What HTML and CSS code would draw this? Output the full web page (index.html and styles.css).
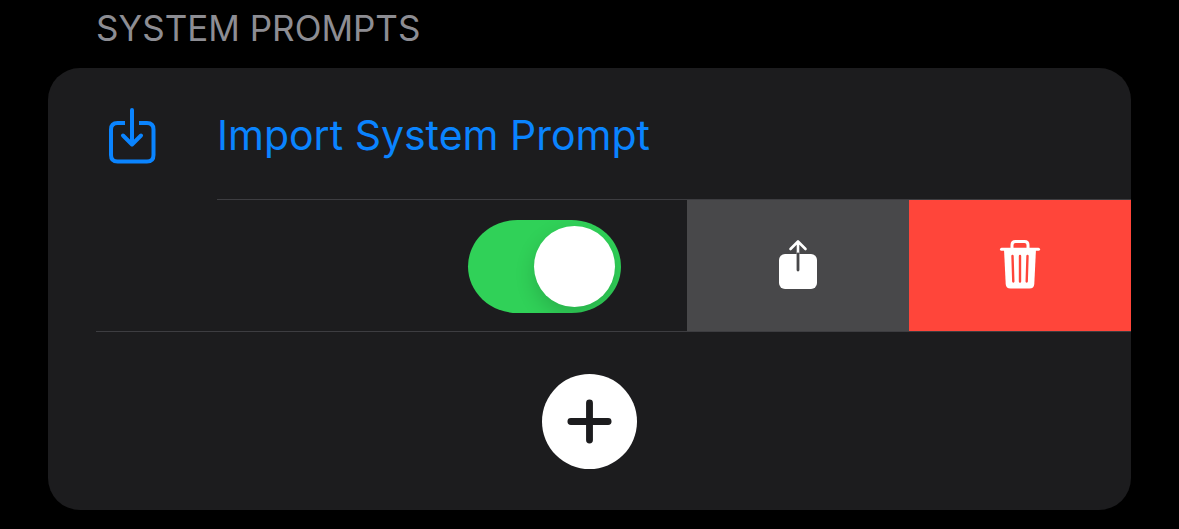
FILE: index.html
```html
<!DOCTYPE html>
<html lang="en">
<head>
<meta charset="utf-8">
<meta name="viewport" content="width=device-width, initial-scale=1">
<title>System Prompts</title>
<link rel="stylesheet" href="styles.css">
</head>
<body>
<main class="section">
  <h2 class="section-title">SYSTEM PROMPTS</h2>
  <div class="card">
    <button class="import-row" type="button">
      <svg class="import-icon" viewBox="0 0 48 58" aria-hidden="true">
        <path d="M17 16H9.500Q3 16 3 22.500V48Q3 54.500 9.500 54.500H39Q45.500 54.500 45.500 48V22.500Q45.500 16 39 16H31"/>
        <path class="arrow" d="M24 3V37M15 28.500L24 37.500L33 28.500"/>
      </svg>
      <span class="import-label">Import System Prompt</span>
    </button>
    <div class="prompt-row">
      <div class="prompt-content">
        <input class="switch" type="checkbox" aria-label="Enable prompt" checked>
      </div>
      <button class="action share" type="button" aria-label="Share">
        <svg class="share-icon" viewBox="0 0 40 52" aria-hidden="true">
          <rect x="1" y="15" width="38" height="35" rx="6" fill="#fff"/>
          <path d="M20 14.500V3M12.500 10L20 2.500L27.500 10" fill="none" stroke="#fff" stroke-width="2.600" stroke-linecap="round" stroke-linejoin="round"/>
          <path d="M20 15V31" fill="none" stroke="#48484a" stroke-width="2.800" stroke-linecap="round"/>
        </svg>
      </button>
      <button class="action delete" type="button" aria-label="Delete">
        <svg class="trash-icon" viewBox="0 0 42 52" aria-hidden="true">
          <path d="M13 10V6Q13 2.500 16.500 2.500H25.500Q29 2.500 29 6V10" fill="none" stroke="#fff" stroke-width="3"/>
          <path d="M2.500 10.300H39.500" fill="none" stroke="#fff" stroke-width="3" stroke-linecap="round"/>
          <path d="M5 10H37L35.300 45Q35 49.500 30.500 49.500H11.500Q7 49.500 6.700 45Z" fill="#fff"/>
          <path d="M13.500 17L14.300 42.500M21 17V42.500M28.500 17L27.700 42.500" fill="none" stroke="#ff453a" stroke-width="2.400" stroke-linecap="round"/>
        </svg>
      </button>
    </div>
    <div class="add-row">
      <button class="add" type="button" aria-label="Add prompt">
        <svg class="add-icon" viewBox="0 0 48 48" aria-hidden="true">
          <path d="M24 5V43M5 24H43"/>
        </svg>
      </button>
    </div>
  </div>
</main>
</body>
</html>
```
FILE: styles.css
```css
* {
  box-sizing: border-box;
}

body {
  margin: 0;
  background: #000;
  font-family: Inter, "Liberation Sans", sans-serif;
}

button {
  border: 0;
  padding: 0;
  font: inherit;
  cursor: pointer;
}

svg {
  display: block;
}

.section {
  padding: 8px 48px 19px;
}

.section-title {
  margin: 0 0 20px;
  padding-left: 48px;
  color: #8d8d93;
  font-size: 35px;
  line-height: 40px;
  font-weight: 400;
}

.card {
  overflow: hidden;
  border-radius: 32px;
  background: #1c1c1e;
}

.import-row {
  display: flex;
  align-items: center;
  width: 100%;
  padding-left: 60px;
  background: none;
  color: #0a84ff;
  text-align: left;
}

.import-icon {
  width: 48px;
  height: 58px;
  margin: 4px 61px 0 0;
  fill: none;
  stroke: currentColor;
  stroke-width: 4;
}

.arrow {
  stroke-linecap: round;
  stroke-linejoin: round;
}

.import-label {
  flex: 1;
  padding: 41px 0 38px;
  border-bottom: 1px solid #3d3d41;
  font-size: 41px;
  line-height: 52px;
}

.prompt-row {
  display: flex;
  min-height: 131px;
}

.prompt-content {
  display: flex;
  flex: 1;
  align-items: center;
  justify-content: flex-end;
  margin-left: 48px;
  padding: 1px 66px 0 0;
}

.switch {
  display: flex;
  align-items: center;
  justify-content: flex-end;
  appearance: none;
  width: 153px;
  height: 93px;
  margin: 0;
  padding-right: 6px;
  overflow: hidden;
  border-radius: 50px / 47px;
  background: #30d158;
}

.switch::before {
  content: "";
  width: 81px;
  height: 81px;
  border-radius: 50%;
  background: #fff;
  box-shadow: 0 8px 20px rgba(0, 0, 0, 0.16);
}

.switch:not(:checked) {
  justify-content: flex-start;
  padding: 0 0 0 6px;
  background: #39393d;
}

.action {
  display: flex;
  align-items: center;
  justify-content: center;
  width: 222px;
  padding-bottom: 2px;
}

.share {
  background: #48484a;
}

.delete {
  background: #ff453a;
}

.share-icon {
  width: 40px;
  height: 52px;
}

.trash-icon {
  width: 42px;
  height: 52px;
}

.add-row {
  display: flex;
  justify-content: center;
  margin-left: 48px;
  padding: 42px 48px 41px 0;
  border-top: 1px solid #3d3d41;
}

.add {
  display: flex;
  align-items: center;
  justify-content: center;
  width: 95px;
  height: 95px;
  border-radius: 50%;
  background: #fff;
}

.add-icon {
  width: 47px;
  height: 47px;
  fill: none;
  stroke: #1c1c1e;
  stroke-width: 7;
  stroke-linecap: round;
}
```
